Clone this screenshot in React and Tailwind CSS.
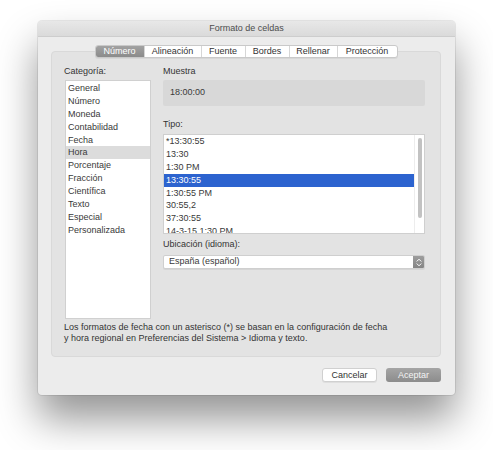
const tabs = [
  { label: "Número", w: "w-[48px]" },
  { label: "Alineación", w: "w-[57px]" },
  { label: "Fuente", w: "w-[44px]" },
  { label: "Bordes", w: "w-[44px]" },
  { label: "Rellenar", w: "w-[48px]" },
  { label: "Protección", w: "w-[60px]" },
];

const categorias = [
  "General",
  "Número",
  "Moneda",
  "Contabilidad",
  "Fecha",
  "Hora",
  "Porcentaje",
  "Fracción",
  "Científica",
  "Texto",
  "Especial",
  "Personalizada",
];

const tipos = [
  "*13:30:55",
  "13:30",
  "1:30 PM",
  "13:30:55",
  "1:30:55 PM",
  "30:55,2",
  "37:30:55",
  "14-3-15 1:30 PM",
];

const App = () => {
  return (
    <div
      className="w-[493px] h-[450px] bg-white pt-[21px] pl-[38px] text-[9px] text-[#3a3a3a]"
      style={{ fontFamily: '"Liberation Sans", Arial, sans-serif' }}
    >
      {/* Window */}
      <div className="w-[417px] h-[374px] bg-[#ececec] rounded-[4px] overflow-hidden flex flex-col shadow-[0_24px_40px_rgba(0,0,0,0.42),0_0_0_1px_rgba(0,0,0,0.08)]">
        {/* Title bar */}
        <div className="h-[16px] shrink-0 bg-gradient-to-b from-[#e8e8e8] to-[#dadada] border-b border-[#cdcdcd] flex items-center justify-center text-[#4d4d4d]">
          Formato de celdas
        </div>

        <div className="flex flex-col pt-[8px] pl-[13px]">
          {/* Tabs */}
          <div className="relative z-10 w-[390px] flex justify-center">
            <div className="flex h-[13px] rounded-[3px] border border-[#c9c9c9] bg-white overflow-hidden shadow-[0_1px_0_rgba(0,0,0,0.05)]">
              {tabs.map((t, i) => (
                <div
                  key={t.label}
                  className={`${t.w} flex items-center justify-center leading-none ${
                    i === 0
                      ? "bg-gradient-to-b from-[#a2a2a2] to-[#8b8b8b] text-white"
                      : "border-l border-[#d6d6d6] text-[#333]"
                  }`}
                >
                  {t.label}
                </div>
              ))}
            </div>
          </div>

          {/* Group panel */}
          <div className="mt-[-7px] w-[390px] h-[306px] bg-[#e3e3e3] border border-[#d9d9d9] rounded-[4px] pt-[13px] pl-[13px] flex flex-col">
            <div className="flex">
              {/* Left column */}
              <div className="w-[86px] flex flex-col">
                <div className="h-[15px] leading-[13px] -ml-[1px] text-[#333]">Categoría:</div>
                <div className="h-[239px] bg-white border border-[#d0d0d0] pt-[1px] flex flex-col">
                  {categorias.map((c) => (
                    <div
                      key={c}
                      className={`h-[12.9px] leading-[12.9px] pl-[2px] ${
                        c === "Hora" ? "bg-[#dcdcdc]" : ""
                      }`}
                    >
                      {c}
                    </div>
                  ))}
                </div>
              </div>

              {/* Right column */}
              <div className="ml-[12px] w-[262px] flex flex-col">
                <div className="h-[15px] leading-[13px] text-[#333]">Muestra</div>
                <div className="h-[26px] bg-[#d8d8d8] rounded-[2px] flex items-center pl-[7px]">
                  18:00:00
                </div>

                <div className="mt-[12px] h-[16px] leading-[13px] text-[#333]">Tipo:</div>
                <div className="h-[100px] bg-white border border-[#cfcfcf] flex overflow-hidden">
                  <div className="flex-1 flex flex-col">
                    {tipos.map((t, i) => (
                      <div
                        key={t + i}
                        className={`h-[12.9px] shrink-0 leading-[12.9px] pl-[2px] ${
                          i === 3 ? "bg-[#2c63cf] text-white" : ""
                        }`}
                      >
                        {t}
                      </div>
                    ))}
                  </div>
                  <div className="w-[10px] shrink-0 border-l border-[#ededed] flex justify-center pt-[3px]">
                    <div className="w-[4px] h-[80px] rounded-full bg-[#c2c2c2]" />
                  </div>
                </div>

                <div className="h-[21px] flex items-center text-[#333]">Ubicación (idioma):</div>
                <div className="h-[14px] bg-white border border-[#cfcfcf] rounded-[2px] flex items-center justify-between overflow-hidden shadow-[0_1px_0_rgba(0,0,0,0.06)]">
                  <span className="pl-[5px]">España (español)</span>
                  <div className="w-[11px] h-full bg-gradient-to-b from-[#9d9d9d] to-[#858585] flex items-center justify-center">
                    <svg width="6" height="9" viewBox="0 0 6 9" fill="none" stroke="white" strokeWidth="1" strokeLinecap="round" strokeLinejoin="round">
                      <path d="M1 3.2 L3 1.2 L5 3.2" />
                      <path d="M1 5.8 L3 7.8 L5 5.8" />
                    </svg>
                  </div>
                </div>
              </div>
            </div>

            {/* Footnote */}
            <div className="mt-[3px] -ml-[1px] leading-[11px] text-[#333]">
              <div>Los formatos de fecha con un asterisco (*) se basan en la configuración de fecha</div>
              <div>y hora regional en Preferencias del Sistema &gt; Idioma y texto.</div>
            </div>
          </div>

          {/* Buttons */}
          <div className="mt-[11px] w-[390px] flex justify-end gap-[9px]">
            <button className="w-[55px] h-[14px] rounded-[3px] bg-white border border-[#d0d0d0] text-[#333] leading-none shadow-[0_1px_0_rgba(0,0,0,0.06)]">
              Cancelar
            </button>
            <button className="w-[55px] h-[14px] rounded-[3px] bg-gradient-to-b from-[#a5a5a5] to-[#8c8c8c] text-[#f4f4f4] leading-none">
              Aceptar
            </button>
          </div>
        </div>
      </div>
    </div>
  );
};

export default App;
